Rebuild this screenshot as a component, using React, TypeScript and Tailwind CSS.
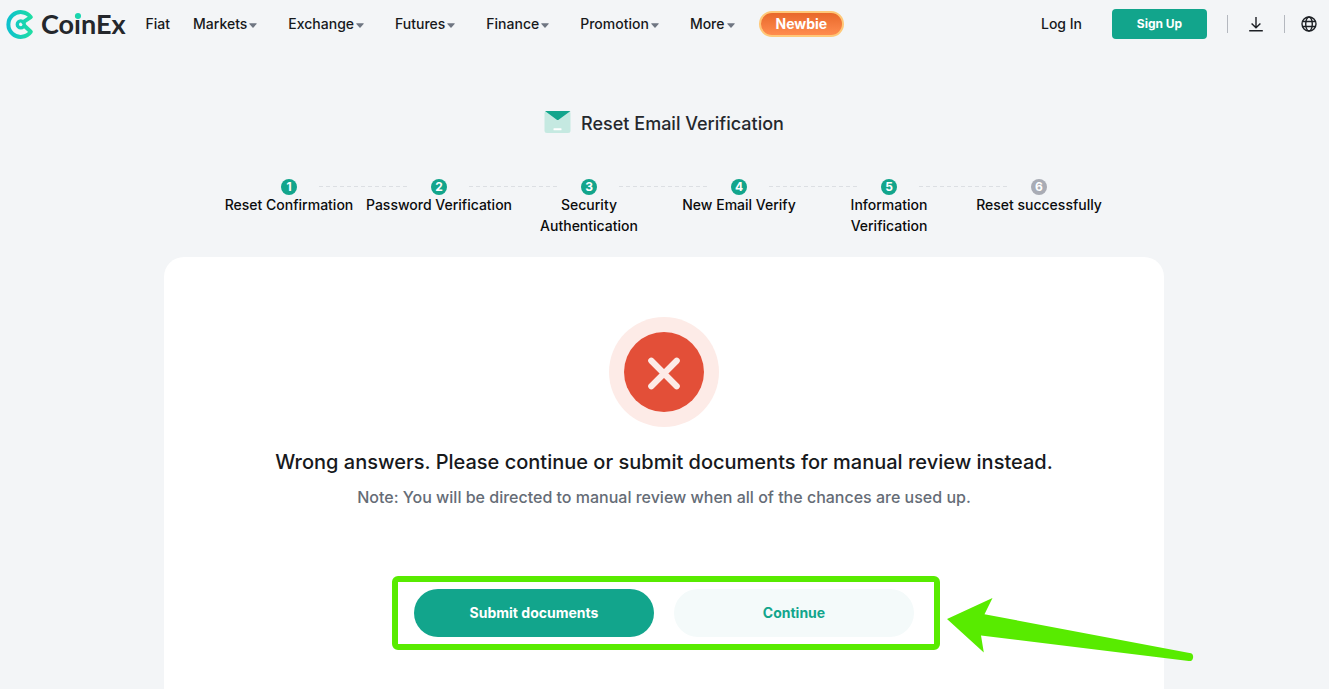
import React from "react";

const menus = ["Markets", "Exchange", "Futures", "Finance", "Promotion", "More"];

const steps = [
  { label: "Reset Confirmation", done: true, wrap: false },
  { label: "Password Verification", done: true, wrap: false },
  { label: "Security Authentication", done: true, wrap: true },
  { label: "New Email Verify", done: true, wrap: false },
  { label: "Information Verification", done: true, wrap: true },
  { label: "Reset successfully", done: false, wrap: false },
];

function Logo() {
  return (
    <a href="#" aria-label="CoinEx home" className="flex items-center gap-1.5">
      <svg width="29" height="31" viewBox="0 0 29 31" fill="none" aria-hidden="true">
        <defs>
          <linearGradient id="mark" x1="0" y1="15" x2="28" y2="15" gradientUnits="userSpaceOnUse">
            <stop stopColor="#0cbfd0" />
            <stop offset="1" stopColor="#20e0a0" />
          </linearGradient>
        </defs>
        <g stroke="url(#mark)" strokeLinejoin="round" strokeLinecap="round">
          <path d="M17.200 13.200L24.800 8.200A12.400 12.400 0 1 0 24.800 22.800L18.400 16.800" strokeWidth="4" />
          <circle cx="14.800" cy="15.400" r="3.500" strokeWidth="3.400" />
        </g>
      </svg>
      <span className="font-['Lato',sans-serif] text-[27px] leading-8 font-bold text-[#24272c]">
        Co
        <span className="relative">
          i
          <span className="absolute top-1.5 left-px size-1.5 rounded-full bg-[#18d6b0]" />
        </span>
        nEx
      </span>
    </a>
  );
}

function Header() {
  return (
    <header className="flex h-12 items-center pr-3 pl-1.5 text-sm font-medium text-[#17191c]">
      <Logo />
      <nav className="ml-5 flex items-center">
        <a href="#" className="mr-[23px]">Fiat</a>
        <div className="flex items-center gap-[31px]">
          {menus.map((m) => (
            <button key={m} type="button" className="flex items-center gap-0.5">
              {m}
              <svg width="8" height="5" viewBox="0 0 8 5" className="mt-0.5" aria-hidden="true">
                <path d="M.8.3h6.400c.5 0 .7.5.4.8L4.500 4.400a.7.7 0 0 1-1 0L.4 1.100C.1.8.3.3.8.3z" fill="#6f7682" />
              </svg>
            </button>
          ))}
        </div>
        <a
          href="#"
          className="ml-6 flex h-[26px] items-center rounded-full border-2 border-[#ffc878] bg-linear-to-b from-[#e8682a] to-[#ff8c4e] px-[15px] font-bold text-white"
        >
          Newbie
        </a>
      </nav>
      <div className="ml-auto flex items-center">
        <a href="#">Log In</a>
        <button type="button" className="ml-[30px] h-[30px] w-[95px] rounded bg-[#12a58c] text-xs font-bold text-white">
          Sign Up
        </button>
        <span className="ml-5 h-[18px] w-px bg-[#b4b8bf]" />
        <button type="button" aria-label="Download" className="ml-5">
          <svg width="16" height="16" viewBox="0 0 16 16" fill="none" stroke="#1d2025" strokeWidth="1.4" aria-hidden="true">
            <path d="M8 1v10.600M3.600 7.400L8 11.800l4.400-4.400M1.200 14.700h13.600" />
          </svg>
        </button>
        <span className="ml-5 h-[18px] w-px bg-[#b4b8bf]" />
        <button type="button" aria-label="Language" className="ml-4">
          <svg width="16" height="16" viewBox="0 0 16 16" fill="none" stroke="#1d2025" strokeWidth="1.4" aria-hidden="true">
            <circle cx="8" cy="8" r="7" />
            <ellipse cx="8" cy="8" rx="3.3" ry="7" />
            <path d="M1.600 5.500h12.800M1.600 10.500h12.800" />
          </svg>
        </button>
      </div>
    </header>
  );
}

function Steps() {
  return (
    <ol className="mx-auto mt-[43px] grid w-full max-w-[900px] grid-cols-6 text-center text-sm leading-[21px] font-medium text-[#0b0c0d]">
      {steps.map((s, i) => (
        <li key={s.label} className="relative flex flex-col items-center">
          <span
            className={
              "flex size-4 items-center justify-center rounded-full text-xs leading-4 font-bold text-white " +
              (s.done ? "bg-[#12a58c]" : "bg-[#a9acb5]")
            }
          >
            {i + 1}
          </span>
          {i < steps.length - 1 && (
            <svg className="absolute top-[7px] left-[calc(50%+30px)] h-px w-[calc(100%-60px)]" aria-hidden="true">
              <line x1="0" y1="0.5" x2="100%" y2="0.5" stroke="#dcdfe3" strokeDasharray="4 3" />
            </svg>
          )}
          <span className={s.wrap ? "-mt-px w-28" : "-mt-px whitespace-nowrap"}>{s.label}</span>
        </li>
      ))}
    </ol>
  );
}

export default function App() {
  return (
    <div className="flex min-h-screen flex-col bg-[#f3f5f7] font-['Inter',sans-serif]">
      <Header />
      <main className="flex flex-1 flex-col pr-px">
        <h1 className="mt-[63px] flex items-center justify-center gap-2.5 text-lg leading-[25px] font-medium text-[#25282d]">
          <svg width="27" height="22" viewBox="0 0 27 22" className="-mt-1" aria-hidden="true">
            <rect x="0.500" width="26" height="22" rx="2.500" fill="#c5e9e1" />
            <path d="M1 0h25.500L14.600 8.700a1.500 1.500 0 0 1-1.800 0z" fill="#12a58c" />
            <rect x="9.500" y="17.300" width="8" height="2" rx="0.500" fill="#fff" />
          </svg>
          Reset Email Verification
        </h1>
        <Steps />
        <section className="mx-auto mt-[21px] flex w-full max-w-[1000px] flex-1 flex-col items-center rounded-t-[20px] bg-white pt-[60px] pb-[39px]">
          <svg width="110" height="110" viewBox="0 0 110 110" role="img" aria-label="Failed">
            <circle cx="55" cy="55" r="55" fill="#fdebe7" />
            <circle cx="55" cy="55" r="40" fill="#e34f38" />
            <path d="M42.300 43.800L67.700 69.200M67.700 43.800L42.300 69.200" stroke="#fdebe7" strokeWidth="6.200" strokeLinecap="round" />
          </svg>
          <p className="mt-5 text-xl leading-[30px] font-medium text-[#17191c]">
            Wrong answers. Please continue or submit documents for manual review instead.
          </p>
          <p className="mt-2 text-base leading-6 font-medium text-[#656c76]">
            Note: You will be directed to manual review when all of the chances are used up.
          </p>
          <div className="relative mt-[67px] ml-1 flex gap-5 rounded-md border-[6px] border-[#58eb00] py-[7px] pr-5 pl-4 text-sm font-bold">
            <button type="button" className="h-12 w-60 rounded-full bg-[#12a58c] text-white">
              Submit documents
            </button>
            <button type="button" className="h-12 w-60 rounded-full bg-[#f4fafa] text-[#12a58c]">
              Continue
            </button>
            <svg className="absolute top-4 left-full ml-3" width="248" height="66" viewBox="0 0 248 66" aria-hidden="true">
              <path d="M1 21L46.500 0L38.500 16.200L243.500 55a4 4 0 0 1-.8 8L35 37.500L37.800 54.500z" fill="#58eb00" />
            </svg>
          </div>
        </section>
      </main>
    </div>
  );
}
